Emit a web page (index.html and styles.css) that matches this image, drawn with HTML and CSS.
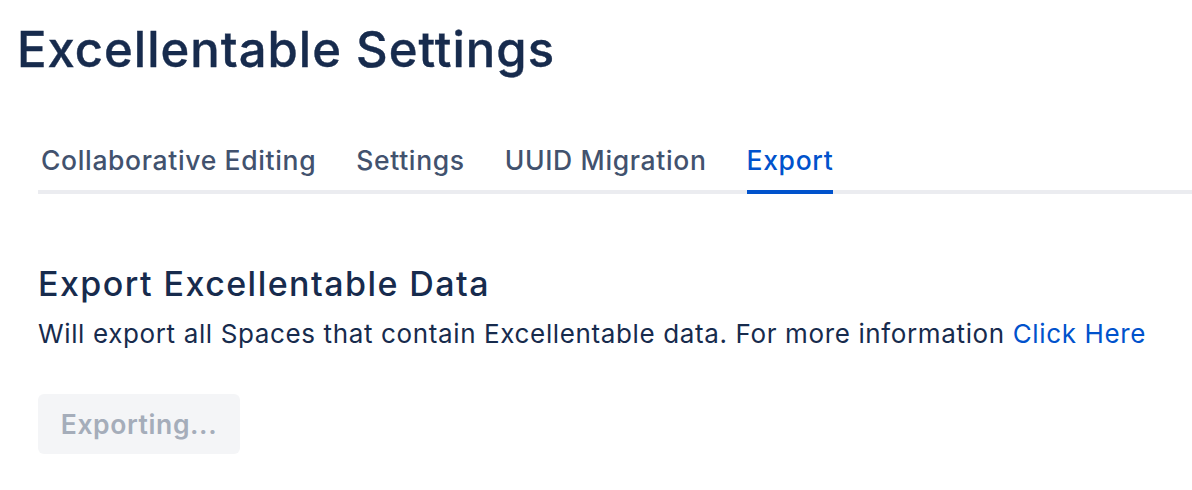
FILE: index.html
```html
<!DOCTYPE html>
<html>
<head>
<meta charset="utf-8">
<link rel="stylesheet" href="styles.css">
</head>
<body>
<div class="page">
  <h1 class="title">Excellentable Settings</h1>
  <div class="content">
    <nav class="tabs">
      <div class="tab">Collaborative Editing</div>
      <div class="tab">Settings</div>
      <div class="tab">UUID Migration</div>
      <div class="tab active">Export</div>
    </nav>
    <section class="panel">
      <h2 class="panel-title">Export Excellentable Data</h2>
      <p class="panel-text">Will export all Spaces that contain Excellentable data. For more information <a class="link" href="#">Click Here</a></p>
      <button class="btn" disabled>Exporting...</button>
    </section>
  </div>
</div>
</body>
</html>
```

FILE: styles.css
```css
html, body {
  margin: 0;
  padding: 0;
  background: #ffffff;
}
body {
  font-family: Inter, "Noto Sans", "Liberation Sans", sans-serif;
  color: #172b4d;
}
.page {
  padding: 0 0 0 17px;
}
.title {
  margin: 0;
  padding-top: 20px;
  font-size: 49px;
  font-weight: 500;
  line-height: 60px;
  letter-spacing: 1px;
  color: #172b4d;
  -webkit-text-stroke: 0.4px #172b4d;
}
.content {
  padding-left: 21px;
}
.tabs {
  display: flex;
  gap: 40px;
  margin-top: 64px;
  padding-left: 3px;
  border-bottom: 4px solid #ebecf0;
}
.tab {
  font-size: 26.5px;
  font-weight: 500;
  letter-spacing: 0.65px;
  color: #42526e;
  line-height: 32px;
  padding-bottom: 14px;
  margin-bottom: -4px;
  border-bottom: 4px solid transparent;
}
.tab.active {
  color: #0052cc;
  border-bottom-color: #0052cc;
}
.panel {
  padding-top: 70px;
}
.panel-title {
  margin: 0;
  font-size: 34px;
  font-weight: 500;
  line-height: 40px;
  letter-spacing: 1.45px;
  color: #172b4d;
}
.panel-text {
  margin: 14px 0 0;
  font-size: 26px;
  line-height: 32px;
  letter-spacing: 0.63px;
  color: #172b4d;
}
.link {
  color: #0052cc;
  text-decoration: none;
}
.btn {
  display: block;
  margin-top: 44px;
  width: 202px;
  height: 60px;
  border: 0;
  border-radius: 6px;
  background: #f4f5f7;
  color: #a5adba;
  font-family: inherit;
  font-size: 26.5px;
  font-weight: 600;
  letter-spacing: 0.6px;
  padding: 0;
}
```
